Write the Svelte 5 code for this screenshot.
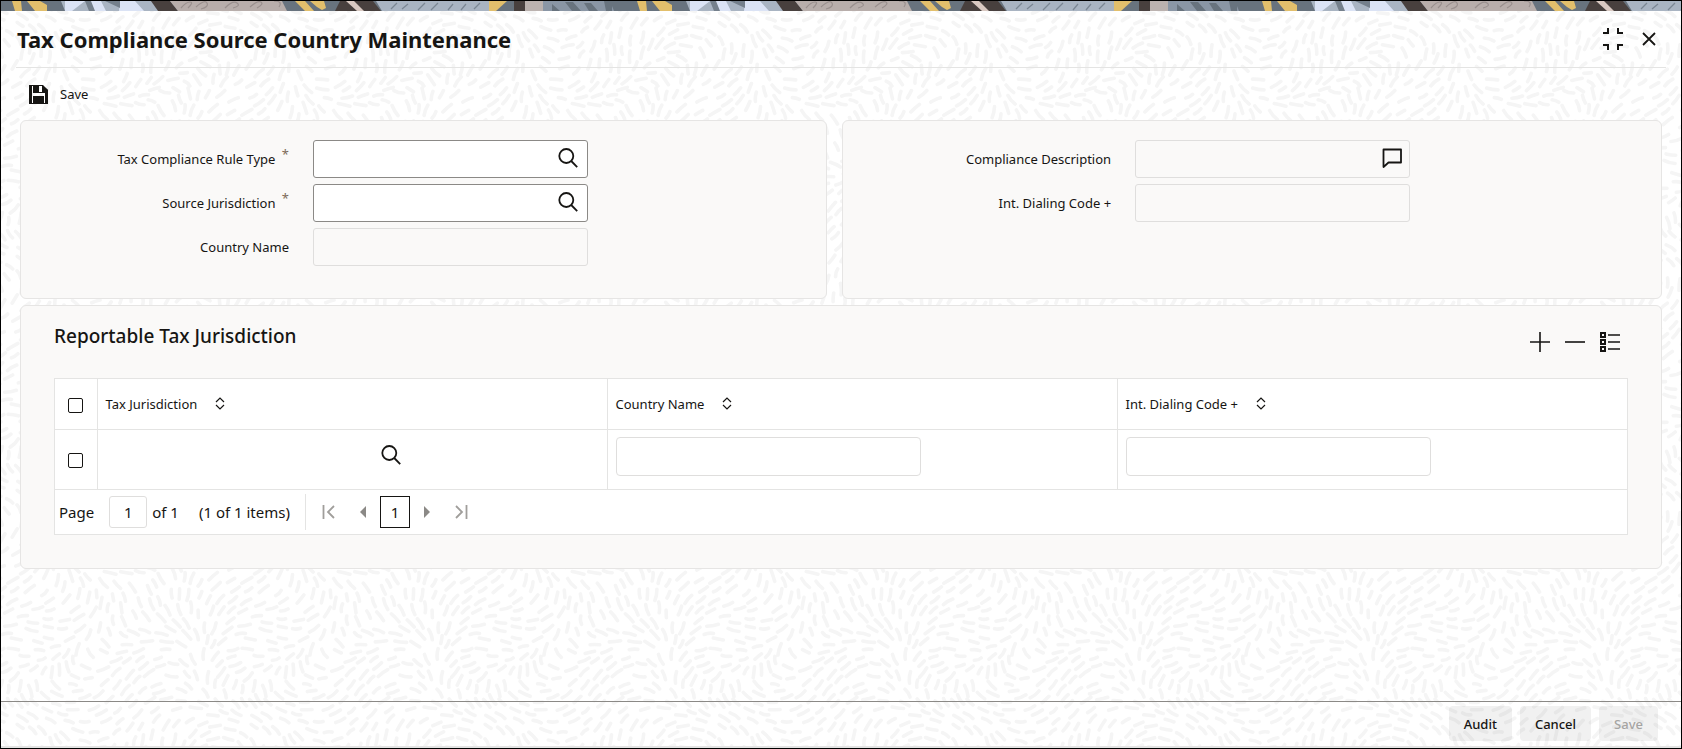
<script>
  const tile = 234;
  const columns = [
    { key: 'jurisdiction', label: 'Tax Jurisdiction' },
    { key: 'country', label: 'Country Name' },
    { key: 'dialing', label: 'Int. Dialing Code +' }
  ];

  let ruleType = $state('');
  let source = $state('');
  let page = $state('1');
  let rows = $state([{ checked: false, jurisdiction: '' }]);
  let allChecked = $state(false);

  const addRow = () => rows.push({ checked: false, jurisdiction: '' });
  const removeRows = () => (rows = rows.filter((row) => !row.checked));
  const toggleAll = () => rows.forEach((row) => (row.checked = allChecked));

  // short strokes that follow a wavy field, the tile repeats without a seam
  const makeStrokes = () => {
    let seed = 7;
    const random = () => {
      seed = (seed * 16807) % 2147483647;
      return seed / 2147483647;
    };
    const wrap = (d) => d - tile * Math.round(d / tile);
    const turn = (Math.PI * 2) / tile;
    const strokes = [];
    for (let n = 0; n < 12000; n++) {
      const x = random() * tile;
      const y = random() * tile;
      const a =
        0.9 +
        1.3 * Math.sin(turn * x + 1) +
        1.1 * Math.sin(turn * y + 4) +
        0.6 * Math.cos(turn * (2 * y + x) + 2);
      const c = Math.cos(a);
      const s = Math.sin(a);
      const near = strokes.some((o) => {
        const dx = wrap(o.x - x);
        const dy = wrap(o.y - y);
        const along = dx * c + dy * s;
        const across = dy * c - dx * s;
        return (along / 15) ** 2 + (across / 7) ** 2 < 1;
      });
      if (!near) strokes.push({ x, y, c, s, len: 3.5 + random() * 2.5, bend: random() * 3 - 1.5 });
    }
    let d = '';
    for (const o of strokes) {
      for (const ox of [-tile, 0, tile]) {
        for (const oy of [-tile, 0, tile]) {
          const x = o.x + ox;
          const y = o.y + oy;
          if (x < -9 || y < -9 || x > tile + 9 || y > tile + 9) continue;
          const p = [
            x - o.c * o.len, y - o.s * o.len,
            x - o.s * o.bend, y + o.c * o.bend,
            x + o.c * o.len, y + o.s * o.len
          ].map((v) => v.toFixed(1));
          d += `M${p[0]} ${p[1]}Q${p[2]} ${p[3]} ${p[4]} ${p[5]}`;
        }
      }
    }
    return d;
  };

  const strokes = makeStrokes();
</script>

{#snippet magnifier()}
  <svg width="20" height="20" viewBox="0 0 20 20" fill="none" stroke="#161513" stroke-width="1.8" aria-hidden="true">
    <circle cx="8.3" cy="8" r="7" />
    <path d="M13.2 13l6 6.2" />
  </svg>
{/snippet}

<div class="window">
  <svg class="texture" aria-hidden="true">
    <defs>
      <pattern id="strokes" width={tile} height={tile} patternUnits="userSpaceOnUse">
        <path d={strokes} fill="none" stroke="#f5f5f5" stroke-width="3.6" stroke-linecap="round" />
      </pattern>
    </defs>
    <rect width="100%" height="100%" fill="url(#strokes)" />
  </svg>

  <svg class="banner" aria-hidden="true">
    <defs>
      <pattern id="banner" width="625" height="10" patternUnits="userSpaceOnUse">
        <rect width="625" height="10" fill="#68737e" />
        <path d="M11 0h9l1 10h-7zM26 0h13l7 4v6h-12z" fill="#e2bf6c" />
        <path d="M60 0h108v10H64z" fill="#a9b4c2" />
        <path d="M64 0h20l-13 10h-7zM86 0h14l5 10H93zM119 0h15l9 10h-25z" fill="#dbe3f5" />
        <path d="M84 0h6l4 10h-6zM104 0h15v7z" fill="#75808c" />
        <path d="M150 0h19l8 10h-20z" fill="#48403e" />
        <path d="M169 0h112l5 10H177z" fill="#b8aeab" />
        <path d="M180 7q5-6 9-6t-2 6m8-1q9-8 11-4t-6 6m24-1q8-8 12-5t-4 5m17-1q8-7 11-5t-4 6m17-7q9 0 5 6" fill="none" stroke="#9a908e" stroke-width="1.2" />
        <path d="M294 0h10l9 10h-9zM309 0h14l2 7-4 2-5-3z" fill="#e2bf6c" />
        <path d="M339 0h33l8 10h-46z" fill="#48403e" />
        <path d="M345 0h8l10 10h-7z" fill="#d9c9c2" />
        <path d="M375 0h114v10H381z" fill="#a9b4c2" />
        <path d="M390 8l6-6m5 6l6-5m10 6l7-7m6 7l7-7m10 7l5-6m8 6l5-6m8 5l6-6" stroke="#7b8794" stroke-width="1.3" />
        <path d="M488 0h18l-11 10h-7z" fill="#e2bf6c" />
        <path d="M513 0h11v10h-11z" fill="#48403e" />
        <path d="M524 0h18v10h-18z" fill="#bbb2af" />
        <path d="M542 0h67l4 10h-71z" fill="#8a96a5" />
        <path d="M551 3l8 7h-8zM564 1h8l8 9h-9zM583 2h7l7 8h-9zM603 0h8v10h-6z" fill="#68737e" />
      </pattern>
    </defs>
    <rect width="100%" height="100%" fill="url(#banner)" />
  </svg>

  <header>
    <h1>Tax Compliance Source Country Maintenance</h1>
    <div class="window-actions">
      <button class="icon" aria-label="Restore">
        <svg width="22" height="22" viewBox="0 0 22 22" fill="none" stroke="#161513" stroke-width="2" aria-hidden="true">
          <path d="M1 5h5V0M16 0v5h5M1 17h5v5M16 22v-5h5" />
        </svg>
      </button>
      <button class="icon" aria-label="Close">
        <svg width="14" height="14" viewBox="0 0 14 14" fill="none" stroke="#161513" stroke-width="1.8" aria-hidden="true">
          <path d="M1 1l12 12M13 1L1 13" />
        </svg>
      </button>
    </div>
  </header>

  <div class="toolbar">
    <button class="save">
      <svg width="19" height="19" viewBox="0 0 19 19" aria-hidden="true">
        <path fill="#161513" fill-rule="evenodd" d="M0 0h14l5 5v14H0zM5 1v6h8V1zM2 1v17h2v-7h11v7h2V6l-3-4v6H4V1z" />
        <path fill="#161513" d="M0 0h3v19H0zM5 0h5v7H5zM4 12h11v7H4zM14 1l5 4v14h-3V8h-2z" />
      </svg>
      Save
    </button>
  </div>

  <main>
    <div class="panels">
      <section class="panel form">
        <div class="field">
          <label for="rule-type">Tax Compliance Rule Type <sup>*</sup></label>
          <div class="control">
            <input id="rule-type" bind:value={ruleType} required />
            <button class="icon" aria-label="Search rule type">{@render magnifier()}</button>
          </div>
        </div>
        <div class="field">
          <label for="source">Source Jurisdiction <sup>*</sup></label>
          <div class="control">
            <input id="source" bind:value={source} required />
            <button class="icon" aria-label="Search jurisdiction">{@render magnifier()}</button>
          </div>
        </div>
        <div class="field">
          <label for="country">Country Name</label>
          <div class="control readonly"><input id="country" readonly /></div>
        </div>
      </section>

      <section class="panel form">
        <div class="field">
          <label for="description">Compliance Description</label>
          <div class="control readonly">
            <input id="description" readonly />
            <button class="icon" aria-label="Show description">
              <svg width="20" height="20" viewBox="0 0 20 20" fill="none" stroke="#161513" stroke-width="1.8" stroke-linejoin="round" aria-hidden="true">
                <path d="M1.5 1.5h17.5v13H6.5l-5 4.5z" />
              </svg>
            </button>
          </div>
        </div>
        <div class="field">
          <label for="dialing">Int. Dialing Code +</label>
          <div class="control readonly"><input id="dialing" readonly /></div>
        </div>
      </section>
    </div>

    <section class="panel list">
      <div class="list-head">
        <h2>Reportable Tax Jurisdiction</h2>
        <div class="list-actions">
          <button class="icon" aria-label="Add row" onclick={addRow}>
            <svg width="20" height="20" viewBox="0 0 20 20" stroke="#161513" stroke-width="1.6" aria-hidden="true">
              <path d="M0 10h20M10 0v20" />
            </svg>
          </button>
          <button class="icon" aria-label="Remove row" onclick={removeRows}>
            <svg width="20" height="20" viewBox="0 0 20 20" stroke="#161513" stroke-width="1.6" aria-hidden="true">
              <path d="M0 10h20" />
            </svg>
          </button>
          <button class="icon" aria-label="Single record view">
            <svg width="20" height="20" viewBox="0 0 20 20" fill="none" stroke="#161513" stroke-width="2" aria-hidden="true">
              <path d="M1 1h4v4H1zM1 8h4v4H1zM1 15h4v4H1z" />
              <path stroke-width="1.6" d="M8 3H20M8 10H20M8 17H20" />
            </svg>
          </button>
        </div>
      </div>

      <div class="grid">
        <table>
          <thead>
            <tr>
              <th class="check"><input type="checkbox" aria-label="Select all rows" bind:checked={allChecked} onchange={toggleAll} /></th>
              {#each columns as column (column.key)}
                <th>
                  <span class="heading">
                    {column.label}
                    <svg width="10" height="13" viewBox="0 0 10 13" fill="none" stroke="#161513" stroke-width="1.2" aria-hidden="true">
                      <path d="M1 5l4-4 4 4M1 8l4 4 4-4" />
                    </svg>
                  </span>
                </th>
              {/each}
            </tr>
          </thead>
          <tbody>
            {#each rows as row}
              <tr>
                <td class="check"><input type="checkbox" aria-label="Select row" bind:checked={row.checked} /></td>
                <td>
                  <div class="cell plain">
                    <input aria-label="Tax Jurisdiction" bind:value={row.jurisdiction} />
                    <button class="icon" aria-label="Search tax jurisdiction">{@render magnifier()}</button>
                  </div>
                </td>
                <td><div class="cell"><input aria-label="Country Name" readonly /></div></td>
                <td><div class="cell"><input aria-label="Int. Dialing Code" readonly /></div></td>
              </tr>
            {/each}
          </tbody>
        </table>

        <nav class="pager" aria-label="Pages">
          <label for="page">Page</label>
          <input id="page" bind:value={page} />
          <span>of 1</span>
          <span class="count">(1 of 1 items)</span>
          <div class="pages">
            <button class="icon" aria-label="First page">
              <svg width="14" height="14" viewBox="0 0 14 14" fill="none" stroke="#a09e9b" stroke-width="1.8" aria-hidden="true">
                <path d="M1.5 0v14M12 1L6 7l6 6" />
              </svg>
            </button>
            <button class="icon" aria-label="Previous page">
              <svg width="6" height="12" viewBox="0 0 6 12" fill="#8b8986" aria-hidden="true"><path d="M6 0v12L0 6z" /></svg>
            </button>
            <button class="current">1</button>
            <button class="icon" aria-label="Next page">
              <svg width="6" height="12" viewBox="0 0 6 12" fill="#8b8986" aria-hidden="true"><path d="M0 0v12l6-6z" /></svg>
            </button>
            <button class="icon" aria-label="Last page">
              <svg width="14" height="14" viewBox="0 0 14 14" fill="none" stroke="#a09e9b" stroke-width="1.8" aria-hidden="true">
                <path d="M12.5 0v14M2 1l6 6-6 6" />
              </svg>
            </button>
          </div>
        </nav>
      </div>
    </section>
  </main>

  <footer>
    <button>Audit</button>
    <button>Cancel</button>
    <button disabled>Save</button>
  </footer>
</div>

<style>
  :global(body) {
    background: #fff;
  }

  .window {
    position: relative;
    isolation: isolate;
    box-sizing: border-box;
    min-height: 100vh;
    display: flex;
    flex-direction: column;
    border: 1px solid #000;
    font-family: 'Noto Sans', 'Open Sans', sans-serif;
    font-size: 13px;
    line-height: 20px;
    color: #161513;
  }

  .texture {
    position: absolute;
    inset: 0;
    width: 100%;
    height: 100%;
    z-index: -1;
  }

  .banner {
    display: block;
    width: 100%;
    height: 10px;
  }

  button,
  input {
    font: inherit;
    color: inherit;
    box-sizing: border-box;
    margin: 0;
  }

  input {
    min-width: 0;
    padding: 0 12px;
  }

  .icon {
    display: flex;
    flex: none;
    padding: 0;
    border: 0;
    background: none;
    cursor: pointer;
  }

  header {
    display: flex;
    align-items: center;
    justify-content: space-between;
    height: 56px;
    margin: 0 15px;
    border-bottom: 1px solid #e4e4e3;
  }

  h1 {
    margin: 0 1px;
    font-size: 22px;
    line-height: 28px;
    font-weight: 700;
  }

  .window-actions {
    display: flex;
    align-items: center;
    gap: 18px;
    padding-right: 10px;
  }

  .toolbar {
    display: flex;
    align-items: center;
    height: 52px;
    padding: 0 28px;
  }

  .save {
    display: flex;
    align-items: center;
    gap: 12px;
    padding: 0;
    border: 0;
    background: none;
  }

  main {
    flex: 1;
    padding: 0 19px;
  }

  .panel {
    box-sizing: border-box;
    border: 1px solid #e6e5e4;
    border-radius: 6px;
    background: #faf9f8;
  }

  .panels {
    display: grid;
    grid-template-columns: 63fr 64fr;
    gap: 15px;
    margin-bottom: 6px;
  }

  .form {
    display: flex;
    flex-direction: column;
    gap: 6px;
    padding: 19px 0 32px;
  }

  .field {
    display: flex;
    align-items: center;
    gap: 24px;
  }

  .field label {
    width: 268px;
    text-align: right;
  }

  sup {
    margin-left: 3px;
    color: #7d6a58;
    font-size: 13px;
    line-height: 0;
    vertical-align: 5px;
  }

  .control {
    display: flex;
    align-items: center;
    box-sizing: border-box;
    width: 275px;
    height: 38px;
    padding-right: 9px;
    border: 1px solid #8b8986;
    border-radius: 3px;
    background: #fff;
  }

  .control .icon,
  .plain .icon {
    padding-bottom: 3px;
  }

  .control input,
  .plain input {
    flex: 1;
    height: 36px;
    border: 0;
    outline: 0;
    background: none;
  }

  .control.readonly {
    padding-right: 7px;
    border-color: #dfdedd;
    background: none;
  }

  .list {
    padding: 16px 33px 33px;
  }

  .list-head {
    display: flex;
    justify-content: space-between;
    align-items: flex-start;
    height: 56px;
  }

  h2 {
    margin: 0;
    font-size: 19px;
    line-height: 28px;
    font-weight: 500;
  }

  .list-actions {
    display: flex;
    gap: 15px;
    padding: 10px 8px 0 0;
  }

  .grid {
    border: 1px solid #e4e4e3;
    background: #fff;
  }

  table {
    width: 100%;
    table-layout: fixed;
    border-collapse: collapse;
  }

  th,
  td {
    height: 50px;
    padding: 0 8px;
    box-sizing: border-box;
    border-left: 1px solid #e4e4e3;
    border-bottom: 1px solid #e4e4e3;
    text-align: left;
    font-weight: 400;
  }

  td {
    height: 60px;
  }

  .check {
    width: 42px;
    padding: 0;
    border-left: 0;
    text-align: center;
  }

  input[type='checkbox'] {
    appearance: none;
    width: 15px;
    height: 15px;
    padding: 0;
    border: 1px solid #161513;
    border-radius: 2px;
    background: #fff;
    vertical-align: middle;
  }

  input[type='checkbox']:checked {
    background: #161513;
  }

  .heading {
    display: flex;
    align-items: center;
    gap: 18px;
  }

  .cell {
    display: flex;
    align-items: center;
    width: 62%;
    height: 39px;
    margin-bottom: 6px;
    box-sizing: border-box;
  }

  .cell:not(.plain) input {
    width: 100%;
    height: 39px;
    border: 1px solid #dfdedd;
    border-radius: 4px;
    background: #fff;
  }

  .plain {
    padding-right: 10px;
  }

  .pager {
    display: flex;
    align-items: center;
    height: 44px;
    padding-left: 4px;
    font-size: 15px;
  }

  .pager input {
    width: 38px;
    height: 32px;
    margin: 0 5px 0 15px;
    padding: 0;
    border: 1px solid #dfdedd;
    border-radius: 3px;
    background: #fff;
    text-align: center;
  }

  .count {
    margin: 0 15px 0 20px;
  }

  .pages {
    display: flex;
    align-items: center;
    height: 36px;
    gap: 14px;
    padding-left: 16px;
    border-left: 1px solid #e4e4e3;
  }

  .pages .icon:first-child {
    margin-right: 10px;
  }

  .pages .icon:last-child {
    margin-left: 10px;
  }

  .current {
    width: 30px;
    height: 32px;
    padding: 0;
    border: 1px solid #161513;
    background: #fff;
  }

  footer {
    display: flex;
    justify-content: flex-end;
    gap: 8px;
    padding: 4px 23px 5px;
    border-top: 1px solid #8b8986;
    border-bottom: 2px solid #e4e4e3;
  }

  footer button {
    height: 35px;
    padding: 0 15px;
    border: 0;
    border-radius: 4px;
    background: rgba(22, 21, 19, 0.06);
    font-weight: 500;
  }

  footer button:disabled {
    color: #a5a4a2;
  }
</style>
